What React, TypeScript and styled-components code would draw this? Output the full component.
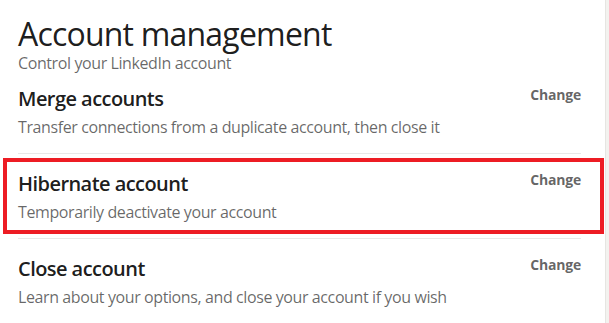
import styled, { createGlobalStyle } from "styled-components";

const GlobalStyle = createGlobalStyle`
  body {
    margin: 0;
    background: #f3f2ef;
    font-family: "Open Sans", "Noto Sans", Arial, sans-serif;
    -webkit-font-smoothing: antialiased;
  }
`;

interface ISetting {
  id: string;
  title: string;
  description: string;
  highlighted?: boolean;
}

const settings: ISetting[] = [
  {
    id: "merge",
    title: "Merge accounts",
    description: "Transfer connections from a duplicate account, then close it",
  },
  {
    id: "hibernate",
    title: "Hibernate account",
    description: "Temporarily deactivate your account",
    highlighted: true,
  },
  {
    id: "close",
    title: "Close account",
    description: "Learn about your options, and close your account if you wish",
  },
];

const Card = styled.div`
  box-sizing: border-box;
  width: 606px;
  min-height: 323px;
  background: #ffffff;
  border-right: 1px solid #e6e5e2;
  padding: 15px 24px 0 18px;
`;

const Header = styled.header`
  margin-bottom: 0;
`;

const PageTitle = styled.h1`
  margin: 0;
  font-size: 32px;
  line-height: 37px;
  font-weight: 400;
  letter-spacing: -0.8px;
  color: rgba(0, 0, 0, 0.9);
`;

const PageSubtitle = styled.p`
  margin: 1px 0 0;
  font-size: 16px;
  line-height: 20px;
  letter-spacing: -0.4px;
  color: rgba(0, 0, 0, 0.6);
`;

const Section = styled.section<{ $first?: boolean; $last?: boolean }>`
  padding: ${(p) => (p.$first ? "14px 0 14px" : "18px 0 14px")};
  border-bottom: ${(p) => (p.$last ? "none" : "1px solid #e8e8e8")};
`;

const HighlightSection = styled.section`
  padding: 4px 0;
  border-bottom: 1px solid #e8e8e8;
`;

const Highlight = styled.div`
  margin: 0 -23px 0 -15px;
  padding: 10px 19px 6px 11px;
  border: 4px solid #ed1c24;
`;

const Row = styled.div`
  display: flex;
  justify-content: space-between;
  align-items: flex-start;
`;

const SettingTitle = styled.h3`
  margin: 0;
  font-size: 20px;
  line-height: 24px;
  font-weight: 600;
  letter-spacing: -0.55px;
  color: rgba(0, 0, 0, 0.9);
`;

const SettingDescription = styled.p`
  margin: 4px 0 0;
  font-size: 16px;
  line-height: 24px;
  letter-spacing: -0.4px;
  color: rgba(0, 0, 0, 0.6);
`;

const ChangeButton = styled.button`
  margin-top: -2px;
  padding: 0;
  border: none;
  background: none;
  font-family: inherit;
  font-size: 14px;
  line-height: 20px;
  font-weight: 700;
  letter-spacing: -0.2px;
  color: rgba(0, 0, 0, 0.62);
  cursor: pointer;
`;

const SettingContent = ({ title, description }: ISetting) => (
  <Row>
    <div>
      <SettingTitle>{title}</SettingTitle>
      <SettingDescription>{description}</SettingDescription>
    </div>
    <ChangeButton>Change</ChangeButton>
  </Row>
);

export default function App() {
  return (
    <>
      <GlobalStyle />
      <Card>
        <Header>
          <PageTitle>Account management</PageTitle>
          <PageSubtitle>Control your LinkedIn account</PageSubtitle>
        </Header>
        {settings.map((setting, i) =>
          setting.highlighted ? (
            <HighlightSection key={setting.id}>
              <Highlight>
                <SettingContent {...setting} />
              </Highlight>
            </HighlightSection>
          ) : (
            <Section
              key={setting.id}
              $first={i === 0}
              $last={i === settings.length - 1}
            >
              <SettingContent {...setting} />
            </Section>
          )
        )}
      </Card>
    </>
  );
}
